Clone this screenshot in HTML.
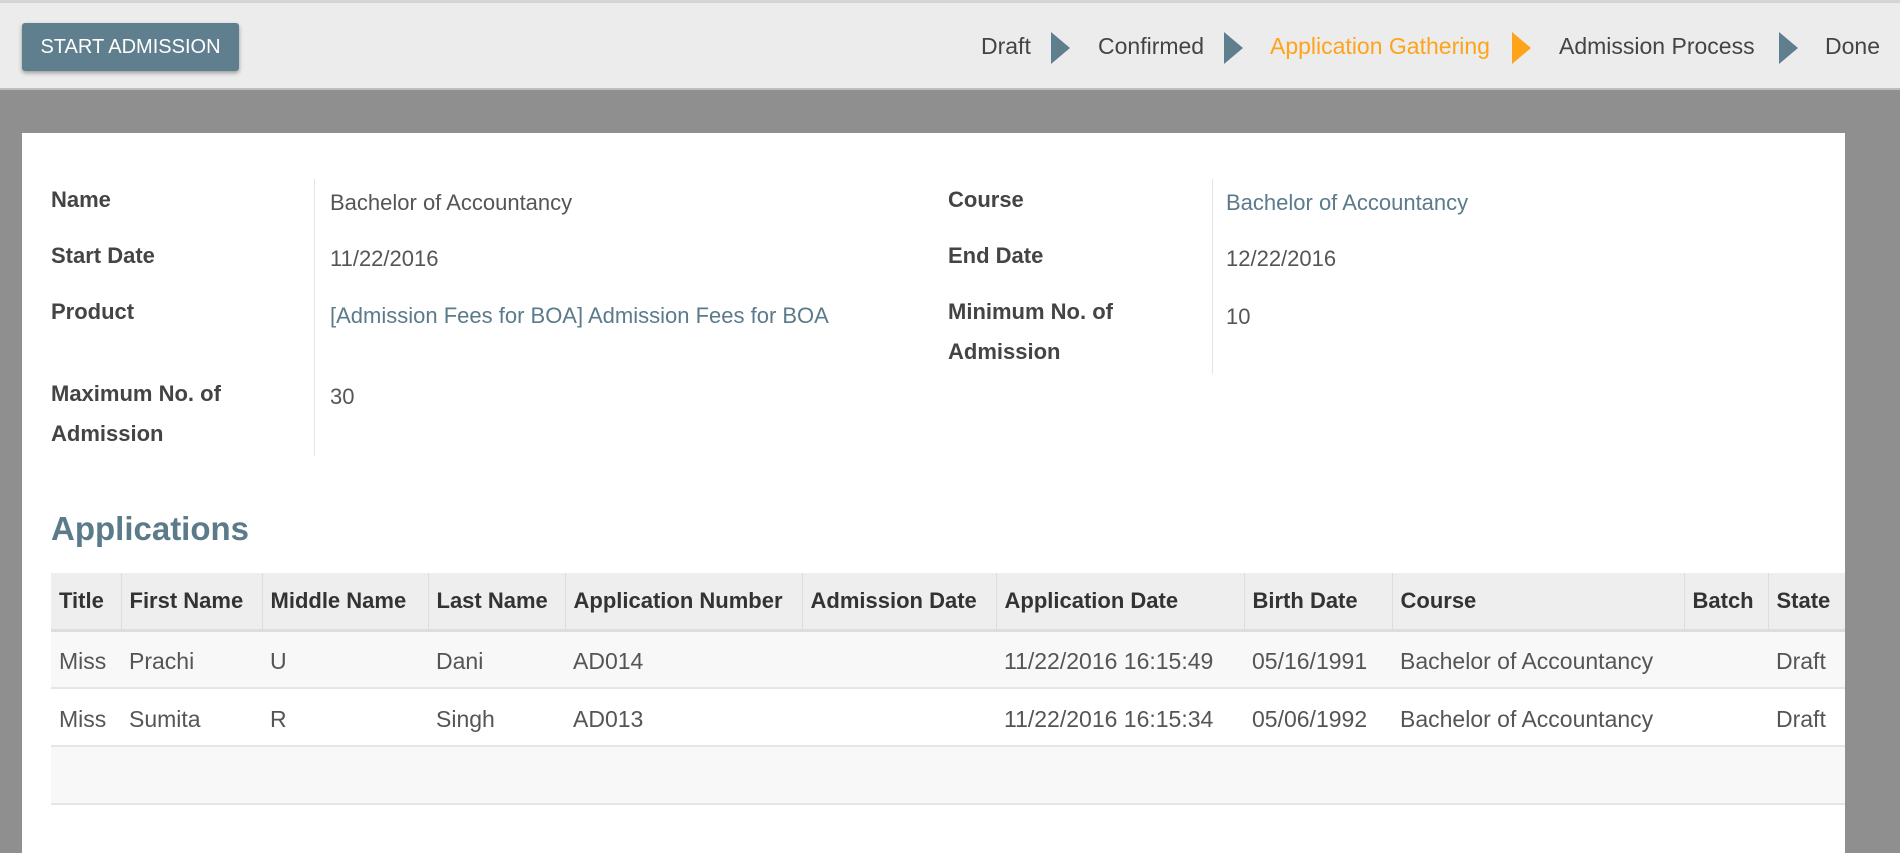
<!DOCTYPE html>
<html><head><meta charset="utf-8"><style>
*{margin:0;padding:0;box-sizing:border-box}
body{width:1900px;height:840px;overflow:hidden;background:#8f8f8f;font-family:"Liberation Sans",Arial,sans-serif;position:relative}
.top{position:absolute;left:0;top:0;width:1900px;height:90px;background:#ececec;border-top:3px solid #d4d4d4;border-bottom:2px solid #bdbdbd}
.btn{position:absolute;left:22px;top:20px;width:217px;height:48px;background:#5f7e8e;color:#fff;font-size:20px;line-height:48px;text-align:center;border-radius:3px;box-shadow:0 2px 4px rgba(0,0,0,.35);white-space:nowrap}
.st{position:absolute;top:30px;font-size:23px;color:#444;white-space:nowrap}
.ar{position:absolute;top:29px;width:0;height:0;border-top:16px solid transparent;border-bottom:16px solid transparent;border-left:19px solid #5f7e8e}
.sheet{position:absolute;left:22px;top:133px;width:1823px;height:720px;background:#fff}
.l{position:absolute;font-size:22px;font-weight:bold;color:#444;line-height:40px;white-space:nowrap}
.v{position:absolute;font-size:22px;color:#555;line-height:40px;white-space:nowrap}
.a{color:#5b7a8a}
.sep{position:absolute;width:1px;background:#e4e4e4}
h2{position:absolute;left:51px;top:510px;font-size:33px;color:#5b7a8a;font-weight:bold}
table{position:absolute;left:51px;top:573px;width:1794px;border-collapse:collapse;font-size:22px;table-layout:fixed}
th{background:#eee;text-align:left;height:57px;padding:0 8px;color:#333;border-left:1px solid #ddd;border-bottom:3px solid #ddd;white-space:nowrap;overflow:hidden}
th:first-child{border-left:none}
td{height:58px;padding:4px 8px 0;color:#555;border-bottom:2px solid #e6e6e6;white-space:nowrap;font-size:23px;overflow:hidden}
tr.o td{background:#f8f8f8}
</style></head><body>
<div class="top">
<div class="btn">START ADMISSION</div>
<div class="st" style="left:981px">Draft</div><div class="ar" style="left:1051px"></div>
<div class="st" style="left:1098px">Confirmed</div><div class="ar" style="left:1224px"></div>
<div class="st" style="left:1270px;color:#ffa31a">Application Gathering</div><div class="ar" style="left:1512px;border-left-color:#ffa31a"></div>
<div class="st" style="left:1559px">Admission Process</div><div class="ar" style="left:1779px"></div>
<div class="st" style="left:1825px">Done</div>
</div>
<div class="sheet"></div>
<div class="sep" style="left:314px;top:179px;height:277px"></div>
<div class="sep" style="left:1212px;top:179px;height:195px"></div>
<div class="l" style="left:51px;top:180px">Name</div>
<div class="v" style="left:330px;top:183px">Bachelor of Accountancy</div>
<div class="l" style="left:51px;top:236px">Start Date</div>
<div class="v" style="left:330px;top:239px">11/22/2016</div>
<div class="l" style="left:51px;top:292px">Product</div>
<div class="v a" style="left:330px;top:296px">[Admission Fees for BOA] Admission Fees for BOA</div>
<div class="l" style="left:51px;top:374px">Maximum No. of<br>Admission</div>
<div class="v" style="left:330px;top:377px">30</div>
<div class="l" style="left:948px;top:180px">Course</div>
<div class="v a" style="left:1226px;top:183px">Bachelor of Accountancy</div>
<div class="l" style="left:948px;top:236px">End Date</div>
<div class="v" style="left:1226px;top:239px">12/22/2016</div>
<div class="l" style="left:948px;top:292px">Minimum No. of<br>Admission</div>
<div class="v" style="left:1226px;top:297px">10</div>
<h2>Applications</h2>
<table>
<tr><th style="width:70px">Title</th><th style="width:141px">First Name</th><th style="width:166px">Middle Name</th><th style="width:137px">Last Name</th><th style="width:237px">Application Number</th><th style="width:194px">Admission Date</th><th style="width:248px">Application Date</th><th style="width:148px">Birth Date</th><th style="width:292px">Course</th><th style="width:84px">Batch</th><th>State</th></tr>
<tr class="o"><td>Miss</td><td>Prachi</td><td>U</td><td>Dani</td><td>AD014</td><td></td><td>11/22/2016 16:15:49</td><td>05/16/1991</td><td>Bachelor of Accountancy</td><td></td><td>Draft</td></tr>
<tr><td>Miss</td><td>Sumita</td><td>R</td><td>Singh</td><td>AD013</td><td></td><td>11/22/2016 16:15:34</td><td>05/06/1992</td><td>Bachelor of Accountancy</td><td></td><td>Draft</td></tr>
<tr class="o"><td colspan="11"></td></tr>
</table>
</body></html>
